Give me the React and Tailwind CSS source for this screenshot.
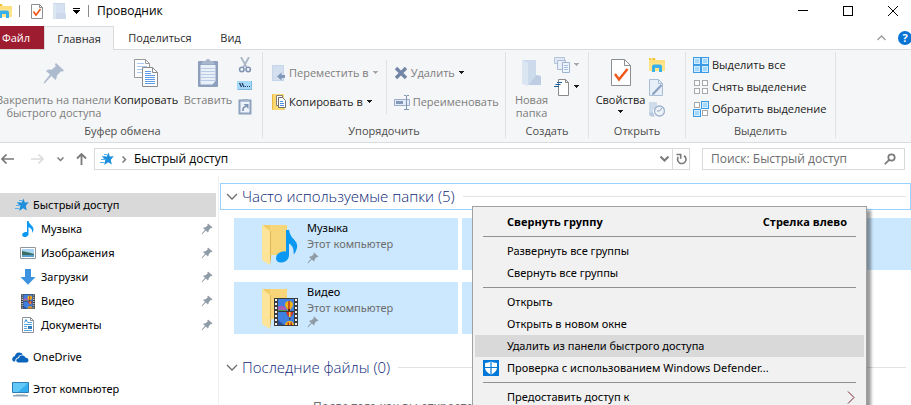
import React, { useState } from 'react';
import clsx from 'clsx';

// --- Icons ---
const Caret = ({ className }) => (
  <svg width="7" height="4" viewBox="0 0 7 4" shapeRendering="crispEdges" className={clsx('shrink-0', className)}>
    <path d="M1 0h5v1H1zM2 1h3v1H2zM3 2h1v1H3z" fill="currentColor" />
  </svg>
);

const Chevron = ({ className, d = 'M1 1l5 5 5-5' }) => (
  <svg width="12" height="7" viewBox="0 0 12 7" fill="none" stroke="currentColor" strokeWidth="1.3" className={clsx('shrink-0', className)}>
    <path d={d} />
  </svg>
);

const ExplorerIcon = () => (
  <svg width="16" height="16" viewBox="0 0 16 16" className="shrink-0">
    <path d="M0 1h6l1 2h9v11H0z" fill="#ffe48c" />
    <path d="M0 1h6v2H0z" fill="#f2c230" />
    <path d="M1.500 1.500h2v1h-2z" fill="#fff" />
    <path d="M0 3h16v3H0z" fill="#ffdf80" />
    <path d="M3 15V9.500Q3 7.500 5 7.500h6q2 0 2 2V15h-3v-4H6v4z" fill="#38b0ea" />
  </svg>
);

const PropertiesIcon = ({ size = 'small' }) => (
  <svg width={size === 'big' ? 22 : 14} height={size === 'big' ? 30 : 17} viewBox={size === 'big' ? '0 0 22 30' : '0 0 14 17'} fill="none">
    {size === 'big' ? (
      <>
        <path d="M1.500 1.500h13l6 6v20h-19z" fill="#fff" stroke="#8a8f94" />
        <path d="M14.500 1.500v6h6" stroke="#8a8f94" />
        <path d="M5 16l4 5.500L17.500 11" stroke="#f0581a" strokeWidth="2.400" />
      </>
    ) : (
      <>
        <path d="M1.500 1.500h8l3 3v11h-11z" fill="#fff" stroke="#8a8f94" />
        <path d="M9.500 1.500v3h3" stroke="#8a8f94" />
        <path d="M3.500 8.500l2.500 3.500L10.500 6" stroke="#f0581a" strokeWidth="1.700" />
      </>
    )}
  </svg>
);

const PaleFolder = ({ size = 'small' }) =>
  size === 'big' ? (
    <svg width="20" height="28" viewBox="0 0 20 28">
      <path d="M0 1h14v15l4 1v9H4z" fill="#ccdaec" />
      <path d="M0 1l6 3v23l-6-2z" fill="#dbe6f3" />
      <path d="M14 16l5 1v9H7z" fill="#bdcee4" />
    </svg>
  ) : (
    <svg width="13" height="16" viewBox="0 0 13 16">
      <path d="M0 0h12v10l1 1v5H0z" fill="#ccdaec" />
      <path d="M1 1h10v9H1z" fill="#d5e1f0" />
      <path d="M0 1l3 1v14l-3-1z" fill="#dde7f4" />
    </svg>
  );

const BigPin = () => (
  <svg width="22" height="22" viewBox="0 0 22 22">
    <path d="M13 1L21 8.500 19.500 9.700 18 9.300 14 13.500Q14 16 12.500 18L8.500 14 2 21 .500 21.500 1 20 7 12.500 3 9Q5 7 8.500 7.700L13 4 11.800 2.500z" fill="#aebbcf" />
  </svg>
);

const Pin = () => (
  <svg width="12" height="12" viewBox="0 0 12 12" className="shrink-0">
    <path d="M7 .500L11.500 4.500 10.500 5.200 9.700 5 7.700 7.200Q7.800 8.500 7 9.400L4.800 7.600 1.500 11 .500 11.500 1 10.300 4 6.800 2 5Q3 4 4.600 4.200L6.800 2.200 6.300 1.400z" fill="#8f9ba5" />
  </svg>
);

const CopyIcon = () => (
  <svg width="26" height="30" viewBox="0 0 26 30" fill="none">
    <path d="M1.500 1.500h11l4 4v14h-15z" fill="#fff" stroke="#9a9a9a" />
    <path d="M12.500 1.500v4h4" stroke="#9a9a9a" />
    <path d="M4 5.500h7M4 8.500h10M4 11.500h10M4 14.500h10" stroke="#a9cbf5" />
    <path d="M9.500 9.500h10l5 5v14h-15z" fill="#fff" stroke="#8a8a8a" />
    <path d="M19.500 9.500v5h5" stroke="#8a8a8a" />
    <path d="M12 13.500h6M12 15.500h6M12 17.500h10M12 19.500h10M12 21.500h10M12 23.500h10M12 25.500h10" stroke="#5b9be8" />
  </svg>
);

const PasteIcon = () => (
  <svg width="22" height="30" viewBox="0 0 22 30">
    <rect x="1" y="3" width="20" height="26" rx="1" fill="#8d9fbd" />
    <path d="M3.500 7h15v16l-3 3.500h-12z" fill="#e9f0fa" />
    <path d="M4 10.500h14M4 13.500h14M4 16.500h14M4 19.500h14M4 22.500h14" stroke="#b9cbe5" />
    <path d="M4.500 5q0-2 4-2 0-2 2.500-2t2.500 2q4 0 4 2v1.500h-13z" fill="#a9b7cc" />
  </svg>
);

const CutIcon = () => (
  <svg width="14" height="16" viewBox="0 0 14 16" fill="none">
    <path d="M3 0l5.500 10M11 0L5.500 10" stroke="#a9b6c6" strokeWidth="1.800" />
    <circle cx="3.800" cy="12.500" r="2.200" stroke="#8095b5" strokeWidth="1.600" />
    <circle cx="10.200" cy="12.500" r="2.200" stroke="#8095b5" strokeWidth="1.600" />
  </svg>
);

const CopyPathIcon = () => (
  <svg width="15" height="9" viewBox="0 0 15 9">
    <path d="M0 0h15v9H0z" fill="#a6d8f8" />
    <path d="M1 8.500h14M14.500 0v9" stroke="#7fb9df" />
    <path d="M2.500 2l2 4M5 2l2 4" stroke="#1d3c5c" strokeWidth="1.200" />
    <path d="M8 5h1v1H8zM10 5h1v1h-1zM12 5h1v1h-1z" fill="#1d3c5c" />
  </svg>
);

const PasteShortcutIcon = () => (
  <svg width="14" height="17" viewBox="0 0 14 17" fill="none">
    <path d="M1.500 2.500h11v13h-11z" fill="#eef3fa" stroke="#8ea2c0" strokeWidth="2" />
    <path d="M4 1h6v2.500H4z" fill="#a3b3ca" />
    <path d="M5 13q-.500-4 3-4.500" stroke="#7e94b6" strokeWidth="1.700" />
    <path d="M5.500 6h5v5z" fill="#7e94b6" />
  </svg>
);

const MoveToIcon = () => (
  <svg width="14" height="16" viewBox="0 0 14 16">
    <path d="M0 0h12v16H0z" fill="#c6d6ea" />
    <path d="M1 1h10v14H1z" fill="#d3dfef" />
    <path d="M5 11.500L9.500 7.500v2.500H13v3H9.500v2.500z" fill="#8298b9" />
  </svg>
);

const CopyToIcon = () => (
  <svg width="14" height="16" viewBox="0 0 14 16" fill="none">
    <path d="M0 0h12v16H0z" fill="#fbd970" />
    <path d="M.500 .500v15M12 14v2" stroke="#e6b93e" />
    <path d="M4.500 1.500h6v10h-6z" fill="#fff" stroke="#808080" />
    <path d="M6.500 3.500h4l3 3v7h-7z" fill="#fff" stroke="#6d6d6d" />
    <path d="M8 7.500h3M8 9.500h4M8 11.500h4" stroke="#4a8fe2" />
  </svg>
);

const DeleteIcon = () => (
  <svg width="14" height="14" viewBox="0 0 14 14">
    <path d="M2 2l10 10M12 2L2 12" stroke="#7286a5" strokeWidth="3.400" />
  </svg>
);

const RenameIcon = () => (
  <svg width="16" height="15" viewBox="0 0 16 15" fill="none">
    <path d="M.500 4.500h15v6H.500z" fill="#e3ebf6" stroke="#9badc8" />
    <path d="M2 6h7v3H2z" fill="#8499ba" />
    <path d="M10 .500h2l.500 .500.500-.500h2M12.500 1v13M10 14.500h5" stroke="#8094b3" />
  </svg>
);

const NewItemIcon = () => (
  <svg width="16" height="16" viewBox="0 0 16 16" fill="none">
    <path d="M.500 .500h10v6H.500z" fill="#dfe8f4" stroke="#b3c3da" />
    <path d="M3.500 3.500h8v9h-8z" fill="#e8eff8" stroke="#a9bbd5" />
    <path d="M8.500 5.500h7v10h-7z" fill="#eef4fb" stroke="#9fb4d1" />
    <path d="M10 8.500h4M10 10.500h4M10 12.500h4" stroke="#aac0de" />
  </svg>
);

const EasyAccessIcon = () => (
  <svg width="16" height="17" viewBox="0 0 16 17" fill="none">
    <path d="M4.500 .500h7l3 3v13h-10z" fill="#fff" stroke="#8a8a8a" />
    <path d="M11.500 .500v3h3" stroke="#8a8a8a" />
    <path d="M3 3.500h5M1.500 5.500h5M0 7.500h5" stroke="#1c5f9e" strokeWidth="1.200" />
  </svg>
);

const EditIcon = () => (
  <svg width="14" height="17" viewBox="0 0 14 17" fill="none">
    <path d="M.500 .500h9l4 4v12H.500z" fill="#e6eef8" stroke="#aabdd7" />
    <path d="M9.500 .500v4h4" stroke="#aabdd7" />
    <path d="M12.500 6L5 14" stroke="#8ba2c3" strokeWidth="2.200" />
    <path d="M3 16l1-3 2 2z" fill="#758cad" />
  </svg>
);

const HistoryIcon = () => (
  <svg width="16" height="17" viewBox="0 0 16 17" fill="none">
    <path d="M0 1h8v7H4v7H0z" fill="#cfdcec" />
    <circle cx="10.500" cy="10" r="5" fill="#edf2f9" stroke="#9fb2ce" strokeWidth="1.300" />
    <path d="M10.500 10L13 7M10.500 10H8" stroke="#8ba0bf" />
    <path d="M0 11.500h4l2 4H2z" fill="#b6c7de" />
  </svg>
);

const SelectIcon = ({ on }) => {
  const cells = [[0, 0], [8, 0], [0, 8], [8, 8]];
  return (
    <svg width="16" height="16" viewBox="0 0 16 16" shapeRendering="crispEdges" className="shrink-0">
      {cells.map(([x, y], i) =>
        on[i] ? (
          <g key={i}>
            <rect x={x} y={y} width="8" height="8" fill="#3b9be6" />
            <rect x={x + 1} y={y + 1} width="6" height="6" fill="#d5edff" />
            <rect x={x + 2} y={y + 2} width="4" height="4" fill="#a3d8fd" />
          </g>
        ) : (
          <rect key={i} x={x + 1.5} y={y + 1.5} width="5" height="5" fill="#fff" stroke="#a8a8a8" />
        )
      )}
    </svg>
  );
};

const StarIcon = () => (
  <svg width="14" height="14" viewBox="0 0 14 14" className="shrink-0">
    <path d="M8.500 .500l1.300 4 4-.300-3 3.600 1 4.700-3.600-2.300L4.200 13l1-4.700L2.500 5.200l4-.500z" fill="#1f8fdc" />
    <path d="M4 2.500h3M2 4.500h4M1 7.500h5M0 10.500h4.500" stroke="#58b0ea" />
  </svg>
);

const MusicIcon = ({ width = 12, height = 16 }) => (
  <svg width={width} height={height} viewBox="0 0 12 16">
    <path d="M5 0h1.500q.500 2.500 3 4.500 3 2.500 1.500 6-.300.700-1 1.200Q11 8 6.500 6v7q-.200 2.500-3.200 3-3 .200-3.200-2Q.300 11.300 4 11h1z" fill="#0a98f2" />
  </svg>
);

const PictureIcon = () => (
  <svg width="16" height="12" viewBox="0 0 16 12">
    <path d="M.500 .500h15v11H.500z" fill="#fff" stroke="#8e979e" />
    <path d="M2 2h12v8H2z" fill="#a7d5f2" />
    <path d="M2 4q5 1 12 3v1H2z" fill="#3c6f63" />
    <path d="M2 8h12v2H2z" fill="#5a9fd0" />
  </svg>
);

const DownloadIcon = () => (
  <svg width="16" height="16" viewBox="0 0 16 16">
    <path d="M5 0h6v8h4.500L8 15.800.500 8H5z" fill="#3c93df" />
  </svg>
);

const VideoIcon = ({ width = 14, height = 15 }) => (
  <svg width={width} height={height} viewBox="0 0 24 28" preserveAspectRatio="none" className="shrink-0">
    <path d="M0 0h24v28H0z" fill="#3b3b3b" />
    <path d="M4 1h16v12H4zM4 14h16v13H4z" fill="#3f7fe0" />
    <path d="M4 9q4-3 8 1l2 3H4z" fill="#a85fb5" />
    <path d="M4 12h9v1H4z" fill="#46a34b" />
    <path d="M4 22l6 5H4z" fill="#284e9e" />
    <path d="M11 7a4 4 0 0 1 8 0q0 2-3 5h-2q-3-3-3-5z" fill="#f1b41c" />
    <path d="M14.300 3h1.400v8h-1.400z" fill="#b5301f" />
    <path d="M14 11h2v2h-2z" fill="#5a2410" />
    <path d="M12 14h7.500q-.500 3-3 5h-1.500q-2.500-2-3-5z" fill="#c9342a" />
    <path d="M15 14h1.500v5H15z" fill="#f5d03a" />
    <path d="M15 20h1.500v1.500H15z" fill="#5a2410" />
    <path d="M11 27q.500-4 4.500-4t4.500 4z" fill="#f1b41c" />
    <path d="M13.500 24.500h1.500V27h-1.500zM16.500 24.500H18V27h-1.500z" fill="#b5301f" />
    <path d="M2 1v27M22 1v27" stroke="#f2f2f2" strokeWidth="2" strokeDasharray="2 2" />
  </svg>
);

const DocumentIcon = () => (
  <svg width="12" height="16" viewBox="0 0 12 16" fill="none">
    <path d="M.500 .500h8l3 3v12H.500z" fill="#fff" stroke="#8b9299" />
    <path d="M8.500 .500v3h3" stroke="#8b9299" />
    <path d="M2.500 5.500l1.500-3 1.500 3" stroke="#2f8fdd" />
    <path d="M2 7.500h8M2 9.500h3M2 11.500h3M2 13.500h8M6 5.500h4" stroke="#5aa6e0" />
    <path d="M6 9h4v3H6z" fill="#2f7ec4" />
  </svg>
);

const OneDriveIcon = () => (
  <svg width="17" height="11" viewBox="0 0 17 11">
    <path d="M1.500 9.500Q-.500 8 .500 6 1 4.500 3 4 3.500.800 7 .500q2.500 0 4 2Q7 2.500 6 5.500 3 6 3.200 9.500z" fill="#0b64bb" />
    <path d="M6 10.500q-1.800-.500-1.800-2.200Q4.500 6.500 6.800 6.300 7.300 3.500 10 3.300q2.800 0 3.700 2.500 2.800.300 2.800 2.700-.200 2-2 2z" fill="#0b64bb" />
  </svg>
);

const ComputerIcon = () => (
  <svg width="17" height="16" viewBox="0 0 17 16">
    <path d="M.500 1.500h16v10H.500z" fill="#35aef0" stroke="#2d7fb3" />
    <path d="M1 2h15L6 11H1z" fill="#62c8f8" />
    <path d="M1 14h15v1.500H1z" fill="#8ea4b4" />
    <path d="M4 13h9v1H4z" fill="#c6d2da" />
  </svg>
);

const DefenderIcon = () => (
  <svg width="16" height="16" viewBox="0 0 16 16">
    <path d="M0 0h16v16H0z" fill="#0078d7" />
    <path d="M2 3q4 0 6-1.800Q10 3 14 3v5q-.500 4-6 6.800Q2.500 12 2 8z" fill="#fff" />
    <path d="M8 1v14M2 7.500h12" stroke="#0078d7" strokeWidth="1.200" />
  </svg>
);

const FolderArt = ({ kind }) => (
  <svg width="40" height="42" viewBox="0 0 40 42" className="shrink-0">
    <path d="M3 1h24v30H8z" fill="#f2cc66" />
    <path d="M10 1h17v30H10z" fill="#f6d678" />
    <path d="M2 1l8 6v34l-8-5z" fill="#fce59a" />
    <path d="M10 7l1 .500V35l-1 6z" fill="#e0b653" />
    {kind === 'music' ? (
      <g transform="translate(16 6)">
        <path d="M10 0h3q1 6 5.500 10 4.500 4.500 1.500 11-1 2.500-2.500 3.500 1-8-4.500-11v12q-.500 6-7 7Q.500 33 0 28.500q0-5.500 6.500-7 2-.500 3.500 0z" fill="#0a98f2" />
      </g>
    ) : (
      <g transform="translate(14 10)"><VideoIcon width={24} height={28} /></g>
    )}
  </svg>
);

// --- Ribbon ---
const RibbonGroup = ({ label, className, children }) => (
  <section aria-label={label} className={clsx('flex h-[86px] shrink-0 flex-col border-r border-[#e0e1e3]', className)}>
    <div className="flex flex-1">{children}</div>
    <div className="text-center leading-[14px] text-[#4c4c4c]">{label}</div>
  </section>
);

const BigButton = ({ icon, disabled, className, children }) => (
  <button type="button" disabled={disabled} className={clsx('flex shrink-0 flex-col items-center whitespace-nowrap leading-[13px]', disabled ? 'text-[#7d7d7d]' : 'text-[#1b1b1b]', className)}>
    <span className="flex h-[41px] items-center justify-center">{icon}</span>
    {children}
  </button>
);

const SmallButton = ({ icon, caret, disabled, children }) => (
  <button type="button" disabled={disabled} className={clsx('flex h-[22px] items-center gap-[3px] whitespace-nowrap', disabled ? 'text-[#7d7d7d]' : 'text-[#1b1b1b]')}>
    {icon}
    {children}
    {caret && <Caret className={caret === 'pale' ? 'text-[#a9a9a9]' : 'text-[#1b1b1b]'} />}
  </button>
);

const Ribbon = () => (
  <div className="flex h-[93px] shrink-0 border-b border-[#dadbdc] bg-[#f5f6f7] pt-[2px]">
    <RibbonGroup label="Буфер обмена" className="-ml-1 w-[267px] pl-[3px] pr-4">
      <BigButton disabled icon={<BigPin />} className="w-[110px]">
        <span>Закрепить на панели</span>
        <span>быстрого доступа</span>
      </BigButton>
      <BigButton icon={<CopyIcon />} className="w-[74px]">Копировать</BigButton>
      <BigButton disabled icon={<PasteIcon />} className="w-[50px]">Вставить</BigButton>
      <div className="flex shrink-0 flex-col items-center gap-2 pl-1 pt-1">
        <button type="button" aria-label="Вырезать" className="h-[17px]"><CutIcon /></button>
        <button type="button" aria-label="Скопировать путь"><CopyPathIcon /></button>
        <button type="button" aria-label="Вставить ярлык"><PasteShortcutIcon /></button>
      </div>
    </RibbonGroup>

    <RibbonGroup label="Упорядочить" className="w-[243px] px-[9px]">
      <div className="flex shrink-0 flex-col gap-[7px] pt-[10px]">
        <SmallButton disabled caret="pale" icon={<MoveToIcon />}>Переместить в</SmallButton>
        <SmallButton caret="dark" icon={<CopyToIcon />}>Копировать в</SmallButton>
      </div>
      <div className="mx-[7px] mt-2 h-[54px] w-px shrink-0 bg-[#e0e1e3]" />
      <div className="flex shrink-0 flex-col gap-[7px] pt-[10px]">
        <SmallButton disabled caret="dark" icon={<DeleteIcon />}>Удалить</SmallButton>
        <SmallButton disabled icon={<RenameIcon />}>Переименовать</SmallButton>
      </div>
    </RibbonGroup>

    <RibbonGroup label="Создать" className="w-[83px] px-[3px]">
      <BigButton disabled icon={<PaleFolder size="big" />} className="w-[45px]">
        <span>Новая</span>
        <span>папка</span>
      </BigButton>
      <div className="flex flex-col pt-[2px]">
        <SmallButton disabled caret="pale" icon={<NewItemIcon />} />
        <SmallButton caret="dark" icon={<EasyAccessIcon />} />
      </div>
    </RibbonGroup>

    <RibbonGroup label="Открыть" className="w-[97px] px-[3px]">
      <BigButton icon={<PropertiesIcon size="big" />} className="w-[57px]">
        <span>Свойства</span>
        <Caret className="mt-1" />
      </BigButton>
      <div className="flex flex-col pt-[2px]">
        <SmallButton icon={<ExplorerIcon />} />
        <SmallButton disabled icon={<EditIcon />} />
        <SmallButton disabled icon={<HistoryIcon />} />
      </div>
    </RibbonGroup>

    <RibbonGroup label="Выделить" className="w-[150px] px-[7px]">
      <div className="flex flex-col pt-[2px]">
        <SmallButton icon={<SelectIcon on={[1, 1, 1, 1]} />}>Выделить все</SmallButton>
        <SmallButton icon={<SelectIcon on={[0, 0, 0, 0]} />}>Снять выделение</SmallButton>
        <SmallButton icon={<SelectIcon on={[0, 1, 1, 0]} />}>Обратить выделение</SmallButton>
      </div>
    </RibbonGroup>
  </div>
);

// --- Sidebar ---
const quickLinks = [
  { name: 'Музыка', icon: <MusicIcon /> },
  { name: 'Изображения', icon: <PictureIcon /> },
  { name: 'Загрузки', icon: <DownloadIcon /> },
  { name: 'Видео', icon: <VideoIcon /> },
  { name: 'Документы', icon: <DocumentIcon /> },
];

const Sidebar = () => (
  <nav className="w-[219px] shrink-0 border-r border-[#f0f0f0] pr-[2px] pt-[17px]">
    <a href="#quick" className="flex h-6 items-center gap-1 bg-[#d9d9d9] pl-[15px]">
      <StarIcon />
      Быстрый доступ
    </a>
    {quickLinks.map((link) => (
      <a key={link.name} href="#folder" className="flex h-6 items-center gap-[5px] pl-5 pr-[3px]">
        <span className="flex w-4 justify-center">{link.icon}</span>
        <span className="flex-1">{link.name}</span>
        <Pin />
      </a>
    ))}
    <a href="#onedrive" className="mt-2 flex h-6 items-center gap-1 pl-3">
      <OneDriveIcon />
      OneDrive
    </a>
    <a href="#computer" className="mt-2 flex h-6 items-center gap-1 pl-3">
      <ComputerIcon />
      Этот компьютер
    </a>
  </nav>
);

// --- Content ---
const Tile = ({ name, kind }) => (
  <div className="flex h-[52px] w-[224px] bg-[#cce8ff] pl-[26px] pt-[6px]">
    {kind && <FolderArt kind={kind} />}
    {name && (
      <div className="-mt-1 pl-[7px] leading-4">
        <div>{name}</div>
        <div className="text-[#6d6d6d]">Этот компьютер</div>
        <Pin />
      </div>
    )}
  </div>
);

const GroupHeader = ({ children, selected }) => (
  <h2 className={clsx("flex h-[27px] items-center border font-['Open_Sans',sans-serif] text-[15px] font-light text-[#0c1f78]", selected ? 'border-[#99d1ff]' : 'border-transparent')}>
    <Chevron className="ml-[5px] mr-1 text-[#6d6d6d]" />
    <span className="whitespace-nowrap pb-[2px]">{children}</span>
    <span className="ml-2 mr-1 h-px flex-1 bg-[#e2e2e2]" />
  </h2>
);

const Separator = () => <div role="separator" className="mx-2 my-[3px] h-px bg-[#919191]" />;

const MenuItem = ({ icon, active, bold, hint, children, onMouseEnter }) => (
  <button type="button" role="menuitem" onMouseEnter={onMouseEnter} className={clsx('flex h-[22px] w-full items-center whitespace-nowrap pr-[17px] text-left', active && 'bg-[#d9d9d9]', bold && "font-['Open_Sans',sans-serif] font-bold")}>
    <span className="w-8 pl-2">{icon}</span>
    <span className="flex-1">{children}</span>
    {hint}
  </button>
);

const ContextMenu = () => {
  const [active, setActive] = useState('unpin');

  const item = (id) => ({ active: active === id, onMouseEnter: () => setActive(id) });

  return (
    <div role="menu" className="absolute left-[253px] top-[30px] w-[395px] border border-[#a0a0a0] bg-[#f1f1f1] px-[2px] py-1 text-black shadow-[4px_4px_3px_rgba(0,0,0,0.4)]">
      <MenuItem {...item('collapse')} bold hint="Стрелка влево">Свернуть группу</MenuItem>
      <Separator />
      <MenuItem {...item('expandAll')}>Развернуть все группы</MenuItem>
      <MenuItem {...item('collapseAll')}>Свернуть все группы</MenuItem>
      <Separator />
      <MenuItem {...item('open')}>Открыть</MenuItem>
      <MenuItem {...item('openNew')}>Открыть в новом окне</MenuItem>
      <MenuItem {...item('unpin')}>Удалить из панели быстрого доступа</MenuItem>
      <MenuItem {...item('scan')} icon={<DefenderIcon />}>Проверка с использованием Windows Defender...</MenuItem>
      <Separator />
      <MenuItem
        {...item('share')}
        hint={
          <svg width="8" height="13" viewBox="0 0 8 13" fill="none" stroke="#7a2430" className="-mr-2">
            <path d="M1 .500l6 6-6 6" />
          </svg>
        }
      >
        Предоставить доступ к
      </MenuItem>
    </div>
  );
};

const App = () => {
  const [query, setQuery] = useState('');

  return (
    <div className="flex h-screen flex-col overflow-hidden bg-white font-['Open_Sans',sans-serif] text-[11px] leading-4 text-black">
      {/* Title bar */}
      <header className="flex h-[22px] shrink-0 items-center">
        <div className="-ml-1"><ExplorerIcon /></div>
        <span className="ml-[7px] h-3 w-px bg-[#8a8a8a]" />
        <button type="button" aria-label="Свойства" className="ml-[10px]"><PropertiesIcon /></button>
        <button type="button" aria-label="Новая папка" className="ml-[9px]"><PaleFolder /></button>
        <button type="button" aria-label="Настройка панели" className="ml-[7px] flex flex-col items-center gap-px">
          <span className="h-px w-[7px] bg-black" />
          <svg width="7" height="4" shapeRendering="crispEdges"><path d="M0 0h7v1H0zM1 1h5v1H1zM2 2h3v1H2zM3 3h1v1H3z" /></svg>
        </button>
        <span className="ml-2 h-3 w-px bg-[#8a8a8a]" />
        <h1 className="ml-2 flex-1 text-[12px]">Проводник</h1>
        <div className="-mr-1 flex">
          <button type="button" aria-label="Свернуть" className="flex h-[22px] w-[45px] items-center justify-center">
            <svg width="10" height="10" shapeRendering="crispEdges"><path d="M0 4.500h10" stroke="#000" /></svg>
          </button>
          <button type="button" aria-label="Развернуть" className="flex h-[22px] w-[45px] items-center justify-center">
            <svg width="10" height="10" fill="none" shapeRendering="crispEdges"><path d="M.500 .500h9v9h-9z" stroke="#000" /></svg>
          </button>
          <button type="button" aria-label="Закрыть" className="flex h-[22px] w-[45px] items-center justify-center">
            <svg width="10" height="10"><path d="M0 0l10 10M10 0L0 10" stroke="#000" /></svg>
          </button>
        </div>
      </header>

      {/* Tabs */}
      <div className="mt-1 flex h-[23px] shrink-0 items-center">
        <button type="button" className="h-[23px] w-11 bg-[#9e1c30] pr-3 text-center text-white">Файл</button>
        <button type="button" className="relative z-10 -mb-px h-6 w-[70px] border border-b-0 border-[#dadbdc] bg-[#f5f6f7] text-[#2b2b2b]">Главная</button>
        <button type="button" className="w-[92px] text-[#2b2b2b]">Поделиться</button>
        <button type="button" className="w-[49px] text-[#2b2b2b]">Вид</button>
        <div className="flex flex-1 items-center justify-end gap-3">
          <button type="button" aria-label="Свернуть ленту">
            <svg width="9" height="6" fill="none" stroke="#9a9a9a" strokeWidth="1.300"><path d="M.500 5l4-4 4 4" /></svg>
          </button>
          <button type="button" aria-label="Справка" className="-mr-px h-[14px] w-[14px] rounded-full bg-[#0a74d4] text-center font-bold leading-[14px] text-white">?</button>
        </div>
      </div>
      <div className="h-px shrink-0 bg-[#dadbdc]" />
      <Ribbon />

      {/* Address bar */}
      <div className="flex shrink-0 items-center pb-[6px] pr-[6px] pt-[5px] text-[12px] text-[#7a7a7a]">
        <button type="button" aria-label="Назад" className="w-[30px] pl-px">
          <svg width="13" height="10" fill="none" stroke="currentColor" strokeWidth="1.700"><path d="M1 5h12M5.500 .500L1 5l4.500 4.500" /></svg>
        </button>
        <button type="button" aria-label="Вперед" className="w-[27px] pl-px text-[#dcdcdc]">
          <svg width="13" height="10" fill="none" stroke="currentColor" strokeWidth="1.700"><path d="M12 5H0M7.500 .500L12 5 7.500 9.500" /></svg>
        </button>
        <button type="button" aria-label="Журнал" className="w-[19px]">
          <svg width="7" height="5" fill="none" stroke="currentColor" strokeWidth="1.500"><path d="M.500 .500l3 3 3-3" /></svg>
        </button>
        <button type="button" aria-label="Вверх" className="w-[18px]">
          <svg width="11" height="12" fill="none" stroke="currentColor" strokeWidth="1.800"><path d="M5.500 12V1M1 5.500L5.500 1 10 5.500" /></svg>
        </button>
        <div className="flex h-[22px] flex-1 items-center border border-[#d9d9d9] pl-[5px]">
          <StarIcon />
          <svg width="5" height="7" fill="none" stroke="currentColor" strokeWidth="1.500" className="ml-2"><path d="M.500 .500l3 3-3 3" /></svg>
          <span className="ml-[7px] flex-1 text-black">Быстрый доступ</span>
          <button type="button" aria-label="Предыдущие расположения" className="mr-[3px]">
            <svg width="9" height="6" fill="none" stroke="currentColor" strokeWidth="2"><path d="M.500 .500l4 4 4-4" /></svg>
          </button>
          <button type="button" aria-label="Обновить" className="flex h-5 w-[17px] items-center justify-center border-l border-[#d9d9d9]">
            <svg width="11" height="12" fill="none" stroke="currentColor" strokeWidth="1.600"><path d="M2.300 4a4.200 4.200 0 1 0 5.700-1.200M.500 1.500h4.200v4.200" /></svg>
          </button>
        </div>
        <label className="ml-3 flex h-[22px] w-[203px] items-center border border-[#d9d9d9] pl-2 pr-2">
          <input type="text" aria-label="Поиск" value={query} onChange={(e) => setQuery(e.target.value)} placeholder="Поиск: Быстрый доступ" className="min-w-0 flex-1 text-black outline-none placeholder:text-[#6d6d6d]" />
          <svg width="12" height="12" fill="none" stroke="currentColor" strokeWidth="1.700"><circle cx="7.500" cy="4.500" r="3.200" /><path d="M5.200 6.800L.800 11.200" /></svg>
        </label>
      </div>

      <div className="flex min-h-0 flex-1 font-['Noto_Sans',sans-serif]">
        <Sidebar />
        <main className="relative min-w-0 flex-1 pl-px pt-[7px]">
          <GroupHeader selected>Часто используемые папки (5)</GroupHeader>
          <div className="grid grid-cols-[repeat(3,224px)] gap-x-1 gap-y-3 pb-5 pl-[14px] pt-2">
            <Tile name="Музыка" kind="music" />
            <Tile />
            <Tile />
            <Tile name="Видео" kind="video" />
            <Tile />
          </div>
          <GroupHeader>Последние файлы (0)</GroupHeader>
          <p className="whitespace-nowrap pl-[93px] pt-[18px] text-[12px] text-[#6d6d6d]">После того как вы откроете</p>
          <ContextMenu />
        </main>
      </div>
    </div>
  );
};

export default App;
